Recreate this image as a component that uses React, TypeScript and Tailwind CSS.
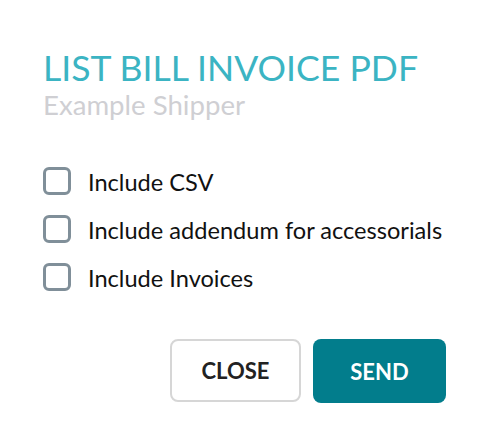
import React from "react";

function Check({ label }: { label: string }) {
  return (
    <label className="flex items-center gap-[17px] h-[28px] whitespace-nowrap">
      <span className="w-[28px] h-[28px] rounded-[6px] border-[3px] border-[#808f99] bg-white shrink-0" />
      <span className="text-[23.6px] text-[#111] leading-none pt-[3px]">{label}</span>
    </label>
  );
}

export default function App() {
  return (
    <div className="w-[488px] h-[444px] bg-white pl-[43px] pr-[42px] pt-[47px]" style={{ fontFamily: "Lato, 'Noto Sans', sans-serif" }}>
      <h1 className="text-[35.6px] leading-[42px] text-[#3bb4c3] font-normal whitespace-nowrap">LIST BILL INVOICE PDF</h1>
      <div className="text-[27.6px] leading-[32px] text-[#cfcfd3]">Example Shipper</div>
      <div className="mt-[46px] flex flex-col gap-[20px]">
        <Check label="Include CSV" />
        <Check label="Include addendum for accessorials" />
        <Check label="Include Invoices" />
      </div>
      <div className="mt-[48px] flex justify-end gap-[12px]">
        <button className="w-[131px] h-[63px] rounded-[8px] border-2 border-[#d6d6d6] bg-white text-[22px] font-bold text-[#222]">CLOSE</button>
        <button className="w-[133px] h-[64px] rounded-[8px] bg-[#027d8c] text-[22px] font-bold text-white">SEND</button>
      </div>
    </div>
  );
}
